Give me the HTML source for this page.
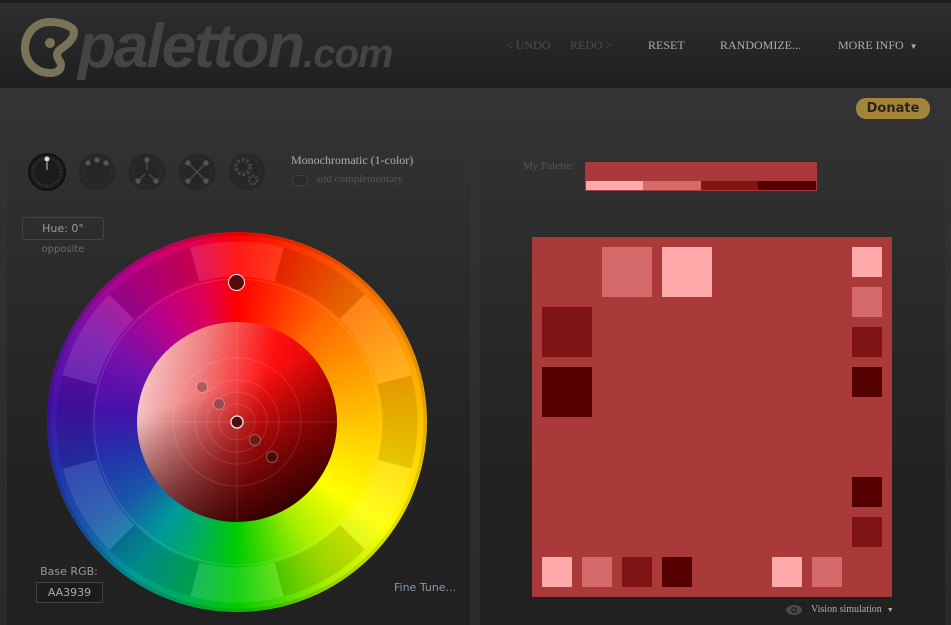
<!DOCTYPE html>
<html><head><meta charset="utf-8"><style>
*{margin:0;padding:0;box-sizing:border-box}
body{width:951px;height:625px;overflow:hidden;background:#303030;font-family:"Liberation Sans",sans-serif;position:relative}
.abs{position:absolute}
#top{left:0;top:0;width:951px;height:3px;background:#1e1e1e}
#hdr{left:0;top:3px;width:951px;height:85px;background:linear-gradient(#2e2e2e,#252525 60%,#1f1f1f)}
.nav{position:absolute;top:35px;font:12px "Liberation Serif",serif;color:#a9b0b8;white-space:nowrap}
.dim{color:#4e4e4e}
#body{left:0;top:88px;width:951px;height:537px;background:linear-gradient(#333 0,#303030 40%,#2a2a2a)}
#lp{left:7px;top:140px;width:463px;height:485px;background:linear-gradient(#323232,#2a2a2a 30%,#222 70%,#212121)}
#rp{left:480px;top:140px;width:465px;height:485px;background:linear-gradient(#323232,#2a2a2a 30%,#222 70%,#212121)}
.sq{position:absolute}
</style></head><body>
<div class="abs" id="top"></div>
<div class="abs" id="hdr">
 <svg class="abs" style="left:20px;top:14px" width="60" height="62" viewBox="0 0 60 62">
  <path d="M30 5C15 5 5 17 5 31c0 14 11 25 25 25 7 0 11-3 11-8 0-4-4-6-4-10 0-5 6-7 9-10 5-4 8-8 8-13C54 10 43 5 30 5z" fill="none" stroke="#7a7358" stroke-width="8"/>
  <circle cx="30" cy="26" r="5" fill="#7a7358"/>
 </svg>
 <div class="abs" style="left:78px;top:8px;font:italic bold 62px 'Liberation Sans',sans-serif;color:#444;letter-spacing:-2px">paletton<span style="font-size:40px;letter-spacing:-1px">.com</span></div>
 <div class="nav dim" style="left:506px">&lt; UNDO</div>
 <div class="nav dim" style="left:570px">REDO &gt;</div>
 <div class="nav" style="left:648px">RESET</div>
 <div class="nav" style="left:720px">RANDOMIZE...</div>
 <div class="nav" style="left:838px">MORE INFO &nbsp;<span style="font-size:8px">▼</span></div>
</div>
<div class="abs" id="body"></div>
<div class="abs" id="lp"></div>
<div class="abs" id="rp"></div>
<div class="abs" style="left:856px;top:98px;width:74px;height:21px;border-radius:10px;background:#a3843a;font:bold 13px 'DejaVu Sans',sans-serif;color:#2a2418;text-align:center;line-height:21px">Donate</div>

<svg class="abs" style="left:0;top:150px" width="280" height="45">
 <g fill="#262626" stroke="#2a2a2a" stroke-width="2">
  <circle cx="47" cy="22" r="18" fill="#1c1c1c" stroke="#111"/>
  <circle cx="97" cy="22" r="18"/><circle cx="147" cy="22" r="18"/><circle cx="197" cy="22" r="18"/><circle cx="247" cy="22" r="18"/>
 </g>
 <g fill="none" stroke="#2e2e2e" stroke-width="3" stroke-dasharray="1.5 1.5">
  <circle cx="47" cy="22" r="14"/><circle cx="97" cy="22" r="14"/><circle cx="147" cy="22" r="14"/><circle cx="197" cy="22" r="14"/><circle cx="247" cy="22" r="14"/>
 </g>
 <circle cx="47" cy="9" r="2.5" fill="#ddd"/><line x1="47" y1="12" x2="47" y2="20" stroke="#ccc"/>
 <g fill="#555" stroke="#555"><circle cx="88" cy="13" r="2.2"/><circle cx="97" cy="10" r="2.2"/><circle cx="106" cy="13" r="2.2"/>
 <circle cx="147" cy="10" r="2.2"/><circle cx="138" cy="31" r="2.2"/><circle cx="156" cy="31" r="2.2"/>
 <line x1="147" y1="12" x2="147" y2="20"/><line x1="140" y1="29" x2="145" y2="24"/><line x1="154" y1="29" x2="149" y2="24"/>
 <circle cx="188" cy="13" r="2.2"/><circle cx="206" cy="13" r="2.2"/><circle cx="188" cy="31" r="2.2"/><circle cx="206" cy="31" r="2.2"/>
 <line x1="190" y1="15" x2="204" y2="29"/><line x1="204" y1="15" x2="190" y2="29"/></g>
 <circle cx="243" cy="17" r="7" fill="none" stroke="#444" stroke-width="4" stroke-dasharray="2.5 2"/>
 <circle cx="253" cy="30" r="4" fill="none" stroke="#444" stroke-width="3" stroke-dasharray="2 1.5"/>
</svg>
<div class="abs" style="left:291px;top:153px;font:12px 'Liberation Serif',serif;color:#a9b0b8">Monochromatic (1-color)</div>
<div class="abs" style="left:292px;top:175px;width:16px;height:11px;border-radius:6px;border:1px solid #3e3e3e;background:#2a2a2a"></div>
<div class="abs" style="left:316px;top:173px;font:11px 'Liberation Serif',serif;color:#555">add complementary</div>

<div class="abs" style="left:22px;top:217px;width:82px;height:23px;border:1px solid #444;border-radius:3px;font:11px 'DejaVu Sans',sans-serif;color:#999;text-align:center;line-height:21px">Hue: 0°</div>
<div class="abs" style="left:22px;top:244px;width:82px;font:10px 'DejaVu Sans',sans-serif;color:#6a6a6a;text-align:center">opposite</div>

<!-- wheel -->
<div class="abs" style="left:47px;top:232px;width:380px;height:380px;border-radius:50%;background:conic-gradient(#ff0000 0deg,#ff1800 10deg,#ff6a00 40deg,#ff9900 65deg,#ffbb00 85deg,#ffd500 100deg,#ffff00 125deg,#aaee00 150deg,#00cc00 180deg,#00aa66 200deg,#009999 215deg,#1a55aa 235deg,#2233aa 255deg,#4411aa 275deg,#7711aa 300deg,#bb0088 325deg,#dd0055 345deg,#ff0000 360deg)"></div>
<div class="abs" style="left:47px;top:232px;width:380px;height:380px;border-radius:50%;background:conic-gradient(from -15deg,rgba(255,255,255,.1) 0 30deg,rgba(0,0,0,.1) 30deg 60deg,rgba(255,255,255,.1) 60deg 90deg,rgba(0,0,0,.1) 90deg 120deg,rgba(255,255,255,.1) 120deg 150deg,rgba(0,0,0,.1) 150deg 180deg,rgba(255,255,255,.1) 180deg 210deg,rgba(0,0,0,.1) 210deg 240deg,rgba(255,255,255,.1) 240deg 270deg,rgba(0,0,0,.1) 270deg 300deg,rgba(255,255,255,.1) 300deg 330deg,rgba(0,0,0,.1) 330deg 360deg);-webkit-mask:radial-gradient(circle,transparent 145px,#000 146px,#000 180px,transparent 181px);mask:radial-gradient(circle,transparent 145px,#000 146px,#000 180px,transparent 181px)"></div>
<svg class="abs" style="left:47px;top:232px" width="380" height="380">
 <circle cx="190" cy="190" r="143" fill="none" stroke="rgba(255,255,255,.15)" stroke-width="1"/>
 <circle cx="190" cy="190" r="188" fill="none" stroke="rgba(0,0,0,.12)" stroke-width="3"/>
</svg>
<div class="abs" style="left:137px;top:322px;width:200px;height:200px;border-radius:50%;background:linear-gradient(160deg,rgba(0,0,0,0) 35%,rgba(40,0,0,.55) 65%,rgba(20,0,0,.95) 95%),linear-gradient(100deg,#f6d6d6 0%,#f08080 30%,#ff1010 60%,#c00000 100%)"></div>
<svg class="abs" style="left:137px;top:322px" width="200" height="200">
 <g fill="none" stroke="rgba(255,255,255,.12)">
  <circle cx="100" cy="100" r="18"/><circle cx="100" cy="100" r="30"/><circle cx="100" cy="100" r="42"/><circle cx="100" cy="100" r="64"/>
  <line x1="100" y1="0" x2="100" y2="200"/><line x1="0" y1="100" x2="200" y2="100"/>
 </g>
 <circle cx="65" cy="65" r="5.5" fill="#b05a5a" stroke="rgba(255,255,255,.3)"/>
 <circle cx="82" cy="82" r="5.5" fill="#9a4a4a" stroke="rgba(255,255,255,.3)"/>
 <circle cx="100" cy="100" r="6" fill="#4a1010" stroke="#eee" stroke-width="1.3"/>
 <circle cx="118" cy="118" r="5.5" fill="#6a1a1a" stroke="rgba(255,255,255,.3)"/>
 <circle cx="135" cy="135" r="5.5" fill="#4a0a0a" stroke="rgba(255,255,255,.3)"/>
</svg>
<div class="abs" style="left:228px;top:274px;width:17px;height:17px;border-radius:50%;background:#5a0a0a;border:1.5px solid #eee"></div>

<div class="abs" style="left:36px;top:565px;width:66px;font:11px 'DejaVu Sans',sans-serif;color:#999;text-align:center">Base RGB:</div>
<div class="abs" style="left:36px;top:582px;width:67px;height:21px;border:1px solid #444;background:#1c1c1c;font:11px 'DejaVu Sans',sans-serif;color:#aaa;text-align:center;line-height:19px">AA3939</div>
<div class="abs" style="left:394px;top:581px;font:11px 'DejaVu Sans',sans-serif;color:#8a9aaa">Fine Tune...</div>

<!-- right -->
<div class="abs" style="left:523px;top:160px;font:11px 'Liberation Serif',serif;color:#555">My Palette:</div>
<div class="abs" style="left:585px;top:162px;width:232px;height:29px;background:#aa3939"></div>
<div class="sq" style="left:586px;top:181px;width:57px;height:9px;background:#ffaaaa"></div>
<div class="sq" style="left:643px;top:181px;width:58px;height:9px;background:#d46a6a"></div>
<div class="sq" style="left:701px;top:181px;width:57px;height:9px;background:#801515"></div>
<div class="sq" style="left:758px;top:181px;width:58px;height:9px;background:#550000"></div>

<div class="abs" style="left:532px;top:237px;width:360px;height:360px;background:#aa3939"></div>
<div class="sq" style="left:602px;top:247px;width:50px;height:50px;background:#d46a6a"></div>
<div class="sq" style="left:662px;top:247px;width:50px;height:50px;background:#ffaaaa"></div>
<div class="sq" style="left:542px;top:307px;width:50px;height:50px;background:#801515"></div>
<div class="sq" style="left:542px;top:367px;width:50px;height:50px;background:#550000"></div>
<div class="sq" style="left:852px;top:247px;width:30px;height:30px;background:#ffaaaa"></div>
<div class="sq" style="left:852px;top:287px;width:30px;height:30px;background:#d46a6a"></div>
<div class="sq" style="left:852px;top:327px;width:30px;height:30px;background:#801515"></div>
<div class="sq" style="left:852px;top:367px;width:30px;height:30px;background:#550000"></div>
<div class="sq" style="left:852px;top:477px;width:30px;height:30px;background:#550000"></div>
<div class="sq" style="left:852px;top:517px;width:30px;height:30px;background:#801515"></div>
<div class="sq" style="left:542px;top:557px;width:30px;height:30px;background:#ffaaaa"></div>
<div class="sq" style="left:582px;top:557px;width:30px;height:30px;background:#d46a6a"></div>
<div class="sq" style="left:622px;top:557px;width:30px;height:30px;background:#801515"></div>
<div class="sq" style="left:662px;top:557px;width:30px;height:30px;background:#550000"></div>
<div class="sq" style="left:772px;top:557px;width:30px;height:30px;background:#ffaaaa"></div>
<div class="sq" style="left:812px;top:557px;width:30px;height:30px;background:#d46a6a"></div>

<svg class="abs" style="left:786px;top:604px" width="18" height="12"><ellipse cx="8" cy="6" rx="8" ry="5" fill="#4a4a4a"/><circle cx="8" cy="6" r="3" fill="#222"/><circle cx="8" cy="6" r="1.5" fill="#4a4a4a"/></svg>
<div class="abs" style="left:811px;top:604px;font:10px 'Liberation Serif',serif;color:#a9b0b8">Vision simulation &nbsp;<span style="font-size:7px">▼</span></div>
</body></html>
